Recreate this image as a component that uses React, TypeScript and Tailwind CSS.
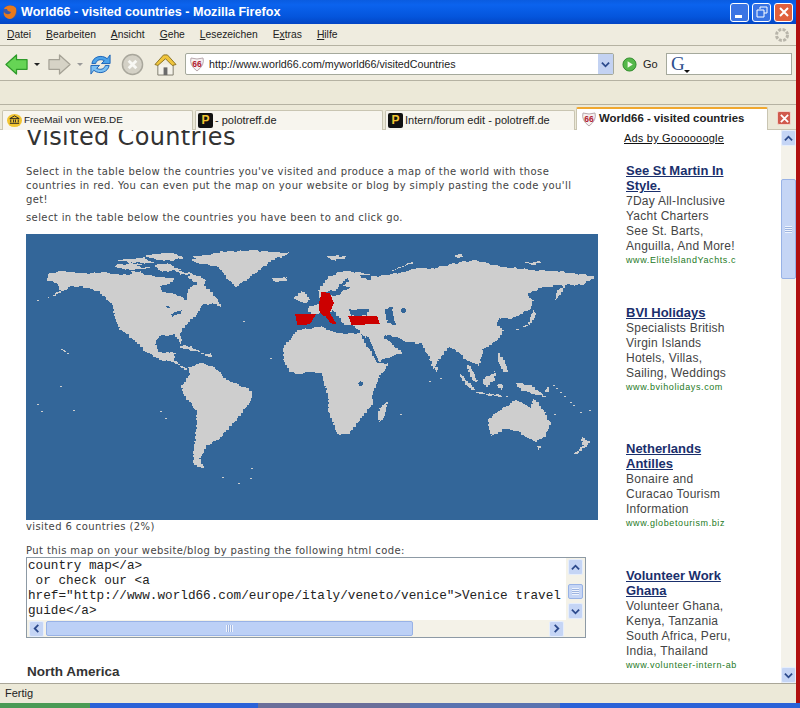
import React from "react";

const ui = "font-['Liberation_Sans',sans-serif]";

const ADS = [
  { title: ["See St Martin In", "Style."], body: ["7Day All-Inclusive", "Yacht Charters", "See St. Barts,", "Anguilla, And More!"], url: "www.ElitelslandYachts.c", gap: "mt-[17px]" },
  { title: ["BVI Holidays"], body: ["Specialists British", "Virgin Islands", "Hotels, Villas,", "Sailing, Weddings"], url: "www.bviholidays.com", gap: "mt-[38px]" },
  { title: ["Netherlands", "Antilles"], body: ["Bonaire and", "Curacao Tourism", "Information"], url: "www.globetourism.biz", gap: "mt-[47px]" },
  { title: ["Volunteer Work", "Ghana"], body: ["Volunteer Ghana,", "Kenya, Tanzania", "South Africa, Peru,", "India, Thailand"], url: "www.volunteer-intern-ab", gap: "mt-[38px]" },
];

const LAND = "#cecece";
const SEA = "#336699";
const RED = "#cc0000";

// rough coast: cut each edge up, shake it a little and snap to the map's pixels
const coast = (pts: string) => {
  const p = pts.split(" ").map((s) => s.split(",").map(Number));
  let d = "";
  p.forEach((a, i) => {
    const b = p[(i + 1) % p.length];
    const len = Math.hypot(b[0] - a[0], b[1] - a[1]);
    const n = Math.max(1, Math.round(len / 6));
    for (let k = 0; k < n; k++) {
      const t = k / n;
      const j = len > 20 ? 1.8 : 0;
      const x = a[0] + (b[0] - a[0]) * t + Math.sin(a[0] * 12.9 + k * 78.2) * j;
      const y = a[1] + (b[1] - a[1]) * t + Math.sin(a[1] * 39.3 + k * 17.7) * j;
      const sx = Math.round(x / 3) * 3;
      const sy = Math.round(y / 3) * 3;
      d += d === "" ? `M${sx} ${sy}` : `H${sx}V${sy}`;
    }
  });
  return `${d}Z`;
};

const Land = ({ list, fill = LAND }: { list: string[]; fill?: string }) => (
  <>
    {list.map((pts) => (
      <path key={pts} d={coast(pts)} fill={fill} />
    ))}
  </>
);

// frame: page x = 40 + x / 3, page y = 245 + y / 3
const AMERICA = [
  "25,85 60,78 130,85 190,82 240,90 300,85 350,95 395,100 445,130 470,115 500,130 520,150 545,185 520,175 490,180 470,210 440,240 420,265 425,295 405,270 360,272 345,295 355,320 385,325 410,320 400,345 440,375 400,350 365,345 320,320 280,280 240,250 225,220 220,180 180,140 130,125 95,125 50,150 15,165 60,135 55,115 20,105",
  "220,60 290,55 330,70 260,75",
  "230,45 310,38 340,55 270,52",
  "310,30 400,22 430,40 370,50",
  "340,60 380,55 420,75 370,80",
  "400,75 450,85 500,105 490,125 470,112",
  "270,82 300,78 305,92",
  "455,35 540,25 600,20 600,118 590,122 560,95 530,55",
  "410,300 450,305 480,322 440,312",
  "480,325 510,325 515,335",
];
const AMERICA_WATER = [
  "360,125 395,110 420,85 450,90 440,120 445,135 438,165 420,150 370,140",
  "375,183 400,185 385,190",
  "392,205 425,195 420,208 398,215",
  "290,60 340,62 310,68",
  "330,45 420,50 380,54",
];

// frame: page x = 20 + x / 3, page y = 230 + y / 3
const WEST = [
  "505,410 540,400 580,410 620,450 700,485 690,520 650,570 600,625 560,650 540,690 550,712 520,705 520,660 530,590 530,540 490,490 485,465 510,430",
  "510,90 600,65 700,62 810,70 760,90 720,120 680,150 650,170 620,140 600,110 540,100",
  "755,145 790,142 802,150 770,156",
];

// frame: page x = 300 + x / 3, page y = 230 + y / 3
const EAST = [
  "20,245 28,230 50,222 62,215 55,178 85,140 130,122 190,130 220,140 290,130 350,115 400,115 460,100 520,90 600,110 700,120 780,125 890,140 850,165 780,165 720,175 680,195 700,215 690,240 640,265 600,265 590,280 610,305 595,330 550,360 540,405 520,400 495,385 475,365 450,350 420,385 402,418 390,385 365,340 320,335 300,325 265,315 250,320 305,370 235,395 205,330 182,305 160,285 140,285 125,283 122,265 100,240 90,250 70,250 45,252",
  "-50,350 -10,300 60,290 85,300 110,310 180,310 200,350 235,400 270,400 240,440 215,500 220,520 180,570 150,610 115,615 85,540 85,500 65,430 40,425 -10,432 -30,425 -50,390",
  "262,515 255,560 240,575 232,550 245,525",
  "770,178 800,165 775,205 765,210",
  "645,300 685,280 698,240 708,258 690,285",
  "500,405 512,410 530,455 518,450",
  "80,80 150,78 110,92",
  "275,122 350,92 300,112",
  "460,72 500,78 475,85",
  "670,98 735,95 710,104",
  "345,118 375,110 370,135",
];

// frame: page x = 430 + x / 3, page y = 330 + y / 3
const OCEANIA = [
  "88,130 135,180 125,180 95,145",
  "135,185 200,195 235,200 180,197",
  "155,150 195,125 195,150 170,172",
  "200,165 215,160 218,180",
  "205,70 220,90 235,125 220,125 205,90",
  "255,158 300,165 345,200 310,190 275,180",
  "175,265 215,235 255,210 285,225 300,235 310,205 345,250 362,285 345,320 320,335 290,320 265,305 235,295 185,318 175,290",
  "322,348 335,348 328,360",
  "428,372 460,345 455,320 480,340 445,372",
  "10,112 24,112 22,125",
  "150,60 160,60 155,70",
  "355,170 358,185 340,185",
];

const DOTS = [
  [61, 349], [64, 351], [67, 353], [63, 350], [37, 300], [60, 386], [160, 411], [165, 418], [37, 404], [41, 411], [73, 410],
  [243, 321], [270, 358], [238, 483], [222, 477], [250, 478], [251, 468], [553, 385], [556, 388], [560, 392], [564, 396],
  [570, 402], [573, 405], [580, 412], [589, 410], [429, 381], [400, 414], [554, 414], [440, 378], [468, 368], [476, 380],
];

const VISITED = [
  "45,207 108,207 90,238 52,240",
  "118,170 125,140 150,145 162,175 148,205 150,215 128,212 116,195",
  "130,205 150,205 170,238 152,235",
  "205,214 292,214 300,237 215,240",
];

const WorldMap = () => (
  <svg viewBox="26 234 573 286" className="w-[573px] h-[286px] block" shapeRendering="crispEdges">
    <rect x="26" y="234" width="573" height="286" fill={SEA} />
    <g transform="translate(40 245) scale(0.33333)">
      <Land list={AMERICA} />
      <Land list={AMERICA_WATER} fill={SEA} />
    </g>
    <g transform="translate(20 230) scale(0.33333)">
      <Land list={WEST} />
    </g>
    <g transform="translate(300 230) scale(0.33333)">
      <Land list={EAST} />
      <ellipse cx="310" cy="242" rx="8" ry="7" fill={SEA} />
      <polygon fill={SEA} points="255,315 290,335 270,332" />
      <polygon fill={SEA} points="196,318 206,322 238,398 230,398" />
      <ellipse cx="182" cy="461" rx="7" ry="7" fill={SEA} />
    </g>
    <g transform="translate(430 330) scale(0.33333)">
      <Land list={OCEANIA} />
    </g>
    {/* frame: page x = 280 + x / 3, page y = 245 + y / 3 */}
    <g transform="translate(280 245) scale(0.33333)">
      <Land list={["38,160 65,135 90,165 80,175 55,165", "0,100 20,97 18,108 2,108", "140,35 180,30 165,48", "-5,28 28,22 5,38"]} />
      <Land fill={SEA} list={["120,150 150,135 165,140 175,120 200,100 208,110 188,125 222,125 190,137 178,152 150,150 125,160", "240,88 275,92 270,103 245,100", "312,190 335,188 345,240 325,235", "208,195 270,190 262,212 215,213", "125,205 150,205 190,240 165,245"]} />
      {VISITED.map((pts) => (
        <polygon key={pts} points={pts} fill={RED} />
      ))}
    </g>
    {DOTS.map(([x, y]) => (
      <rect key={`${x}-${y}`} x={x} y={y} width="2" height="1" fill={LAND} />
    ))}
  </svg>
);

const Shield = () => (
  <svg viewBox="0 0 16 16" className="w-4 h-4 shrink-0">
    <path d="M2 2 Q8 4 14 2 Q16 9 8 15 Q0 9 2 2Z" fill="#f6f1f1" stroke="#b9a8ac" />
    <text x="8" y="11" textAnchor="middle" fontSize="8.5" fontWeight="700" fill="#b02030" fontFamily="Liberation Sans">66</text>
  </svg>
);

const PIcon = () => (
  <span className="w-[15px] h-[15px] shrink-0 rounded-[2px] bg-[#111] text-[#f2c531] text-[12px] leading-[15px] font-bold text-center">P</span>
);

const Tab = ({ icon, label, w, text }: { icon: React.ReactNode; label: string; w: string; text: string }) => (
  <div className={`${w} h-[20px] mt-[5px] mr-[2px] flex items-center gap-[2px] pl-[2px] bg-[#f7f5ee] border border-[#c9c5b2] border-b-0 rounded-t-[2px] ${text} text-[#222] whitespace-nowrap`}>
    {icon}
    <span>{label}</span>
  </div>
);

const Up = ({ d }: { d: string }) => (
  <div className="w-[15px] h-[16px] shrink-0 rounded-[2px] bg-[#c5d5f5] border border-[#e6eefc] flex items-center justify-center">
    <svg viewBox="0 0 10 10" className="w-[9px] h-[9px]">
      <path d={d} fill="none" stroke="#2c4a8c" strokeWidth="2" />
    </svg>
  </div>
);

const UP = "M1 7 L5 3 L9 7";
const DOWN = "M1 3 L5 7 L9 3";
const LEFT = "M7 1 L3 5 L7 9";
const RIGHT = "M3 1 L7 5 L3 9";

const Grip = ({ vertical }: { vertical?: boolean }) => (
  <div className={vertical ? "w-[7px] h-[7px] bg-[repeating-linear-gradient(0deg,#eef3fd_0,#eef3fd_1px,#9db4e0_1px,#9db4e0_2px)]" : "w-[7px] h-[7px] bg-[repeating-linear-gradient(90deg,#eef3fd_0,#eef3fd_1px,#9db4e0_1px,#9db4e0_2px)]"} />
);

const Toolbar = () => (
  <div className="h-[35px] shrink-0 flex items-center border-b border-[#b5b2a2] bg-[#efecdf] pl-[5px] pt-[2px] [&>*]:shrink-0">
    <svg viewBox="0 0 24 24" className="w-[23px] h-[23px]">
      <path d="M1 12 L12 2 V7 H23 V17 H12 V22Z" fill="#66d455" stroke="#2f9a2a" strokeWidth="1.3" strokeLinejoin="round" />
    </svg>
    <span className="ml-[6px] w-0 h-0 border-x-[3px] border-x-transparent border-t-[3px] border-t-[#222]" />
    <svg viewBox="0 0 24 24" className="ml-[8px] w-[23px] h-[23px]">
      <path d="M23 12 L12 2 V7 H1 V17 H12 V22Z" fill="#d6d3c6" stroke="#a5a296" strokeWidth="1.3" strokeLinejoin="round" />
    </svg>
    <span className="ml-[6px] w-0 h-0 border-x-[3px] border-x-transparent border-t-[3px] border-t-[#999]" />
    <svg viewBox="0 0 24 24" className="ml-[6px] w-[23px] h-[23px]">
      <path d="M3 11 C4 4 13 1 19 6 L22 2 V11 H13 L16 8 C12 6 8 7 7 11Z" fill="#4da3e8" stroke="#1c64b8" />
      <path d="M21 13 C20 20 11 23 5 18 L2 22 V13 H11 L8 16 C12 18 16 17 17 13Z" fill="#7cc0f2" stroke="#1c64b8" />
    </svg>
    <svg viewBox="0 0 24 24" className="ml-[9px] w-[23px] h-[23px]">
      <circle cx="12" cy="12" r="10.5" fill="#d4d1c6" stroke="#a9a79c" strokeWidth="1.5" />
      <path d="M8 8 L16 16 M16 8 L8 16" stroke="#f8f8f4" strokeWidth="3" />
    </svg>
    <svg viewBox="0 0 24 24" className="ml-[10px] w-[23px] h-[23px]">
      <path d="M4 12 V23 H20 V12" fill="#f4f2ea" stroke="#7d7a6c" />
      <path d="M1 12 L10 2 H14 L23 12 L19 13 L12 6 L4 13Z" fill="#f0c53c" stroke="#8a7224" />
      <rect x="10" y="15" width="4" height="8" fill="#6a6a6a" />
    </svg>
    <div className="ml-[8px] w-[429px] h-[22px] flex items-center bg-white border border-[#a5a99c] rounded-[2px]">
      <span className="ml-[3px]"><Shield /></span>
      <span className={`${ui} ml-[4px] flex-1 text-[10.7px] text-[#222]`}>http://www.world66.com/myworld66/visitedCountries</span>
      <div className="w-[15px] h-[20px] bg-[#c3d2f2] flex items-center justify-center">
        <svg viewBox="0 0 10 10" className="w-[9px] h-[9px]"><path d={DOWN} fill="none" stroke="#2c4a8c" strokeWidth="2" /></svg>
      </div>
    </div>
    <svg viewBox="0 0 16 16" className="ml-[8px] w-[15px] h-[15px]">
      <circle cx="8" cy="8" r="7" fill="#55b84a" stroke="#2f8a2a" />
      <path d="M6 4.5 L11.5 8 L6 11.5Z" fill="#f2fbe8" />
    </svg>
    <span className="ml-[6px] w-[23px] text-[11px] text-[#222]">Go</span>
    <div className="w-[126px] h-[22px] flex items-center bg-white border border-[#a5a99c] pl-[3px]">
      <div className="relative w-[20px] h-[18px] text-[#2d4f8d] text-[19px] leading-[18px] font-['Liberation_Serif',serif] pl-[1px]">
        G
        <span className="absolute right-[0px] bottom-[0px] w-0 h-0 border-x-[3px] border-x-transparent border-t-[3px] border-t-[#111]" />
      </div>
    </div>
  </div>
);

const App = () => {
  return (
    <div className={`${ui} w-[800px] h-[708px] overflow-hidden flex flex-col bg-[#b01010]`}>
      <div className="flex-1 min-h-0 flex flex-col mr-[4px] bg-[#ece9d8]">
        {/* Title bar */}
        <div className="h-[24px] shrink-0 flex items-center pl-[2px] pr-[3px] bg-[linear-gradient(180deg,#0a5ce0_0%,#0b63ee_20%,#0455dc_70%,#0345c4_100%)]">
          <svg viewBox="0 0 16 16" className="w-[16px] h-[16px]">
            <circle cx="8" cy="8" r="7" fill="#3b5aa8" />
            <path d="M2 5 C3 1 11 0 14 4 C15 8 13 14 8 15 C4 15 1 11 2 8 C4 11 8 11 9 8 C7 7 5 7 5 5Z" fill="#e8791c" />
          </svg>
          <span className="ml-[3px] flex-1 text-[12.6px] font-bold text-white">World66 - visited countries - Mozilla Firefox</span>
          <div className="flex gap-[3px]">
            <div className="w-[19px] h-[19px] rounded-[3px] border border-white bg-[#3a74e4] flex items-end pl-[4px] pb-[3px]">
              <span className="w-[7px] h-[3px] bg-white" />
            </div>
            <div className="w-[19px] h-[19px] rounded-[3px] border border-white bg-[#3a74e4] flex items-center justify-center">
              <svg viewBox="0 0 12 12" className="w-[12px] h-[12px]"><path d="M4 3 V1 H11 V7 H8 M1 4 H8 V11 H1Z" fill="none" stroke="#fff" /></svg>
            </div>
            <div className="w-[19px] h-[19px] rounded-[3px] border border-white bg-[#e0603c] flex items-center justify-center">
              <svg viewBox="0 0 12 12" className="w-[12px] h-[12px]"><path d="M2 2 L10 10 M10 2 L2 10" stroke="#fff" strokeWidth="2" /></svg>
            </div>
          </div>
        </div>

        {/* Menu */}
        <div className="h-[22px] shrink-0 flex items-center justify-between border-b border-[#b5b2a2] bg-[#efecdf] pl-[7px] pr-[6px] text-[10.3px] text-[#222]">
          <div className="flex gap-[15px]">
            <span><u>D</u>atei</span>
            <span><u>B</u>earbeiten</span>
            <span><u>A</u>nsicht</span>
            <span><u>G</u>ehe</span>
            <span><u>L</u>esezeichen</span>
            <span>E<u>x</u>tras</span>
            <span><u>H</u>ilfe</span>
          </div>
          <svg viewBox="0 0 16 16" className="w-[16px] h-[16px]">
            <circle cx="8" cy="8" r="5.5" fill="none" stroke="#b8b5aa" strokeWidth="3" strokeDasharray="3 1.3" />
          </svg>
        </div>

        <Toolbar />

        {/* Empty bookmarks bar */}
        <div className="h-[24px] shrink-0 border-b border-[#b5b2a2] bg-[#ece9d8]" />

        {/* Tabs */}
        <div className="h-[25px] shrink-0 flex items-start pl-[2px] border-b border-[#c9c5b2] bg-[#ece9d8]">
          <Tab w="w-[191px]" text="text-[9.9px]" label="FreeMail von WEB.DE" icon={
            <svg viewBox="0 0 16 16" className="w-[15px] h-[15px] ml-[2px] shrink-0">
              <ellipse cx="8" cy="8" rx="8" ry="7" fill="#f2c531" />
              <path d="M3 11 H13 M4 10 V7 M7 10 V7 M9 10 V7 M12 10 V7 M3 6 L8 3 L13 6Z" stroke="#222" fill="none" />
            </svg>
          } />
          <Tab w="w-[188px]" text="text-[11px]" label="- polotreff.de" icon={<PIcon />} />
          <Tab w="w-[190px]" text="text-[11px]" label="Intern/forum edit - polotreff.de" icon={<PIcon />} />
          <div className="w-[192px] h-[24px] -ml-[1px] mt-[2px] pb-[3px] flex items-center gap-[2px] pl-[4px] bg-white border-t-2 border-[#f0a830] border-x border-x-[#c9c5b2] rounded-t-[2px] text-[11.4px] font-bold text-[#222]">
            <Shield />
            <span>World66 - visited countries</span>
          </div>
          <div className="ml-[9px] mt-[6px] w-[14px] h-[14px] rounded-[2px] bg-[#d05a4c] border border-[#f2d3c8] flex items-center justify-center">
            <svg viewBox="0 0 10 10" className="w-[9px] h-[9px]"><path d="M1 1 L9 9 M9 1 L1 9" stroke="#fff" strokeWidth="2" /></svg>
          </div>
        </div>

        {/* Page */}
        <div className="flex-1 min-h-0 flex bg-white">
          <div className="w-[598px] shrink-0 overflow-hidden pl-[26px] font-['DejaVu_Sans',sans-serif] text-[10px] tracking-[0.4px] text-[#444]">
            <h1 className="-mt-[7px] text-[24px] leading-[28px] font-normal tracking-[0.35px] text-[#333] whitespace-nowrap">Visited Countries</h1>
            <p className="mt-[14px] leading-[14px] w-[560px]">Select in the table below the countries you've visited and produce a map of the world with those countries in red. You can even put the map on your website or blog by simply pasting the code you'll get!</p>
            <p className="mt-[4px] leading-[14px]">select in the table below the countries you have been to and click go.</p>
            <div className="mt-[9px]"><WorldMap /></div>
            <p className="leading-[14px]">visited 6 countries (2%)</p>
            <p className="mt-[10px] leading-[14px]">Put this map on your website/blog by pasting the following html code:</p>
            <div className="-mt-[1px] w-[560px] h-[81px] flex border border-[#8d9aa5] bg-white">
              <div className="flex-1 min-w-0 flex flex-col">
                <pre className="flex-1 pl-[1px] font-['Liberation_Mono',monospace] text-[12.7px] leading-[15px] tracking-[0px] text-[#222]">{`country map</a>
 or check our <a
href="http://www.world66.com/europe/italy/veneto/venice">Venice travel
guide</a>`}</pre>
                <div className="h-[17px] flex items-center px-[2px] bg-[#f4f2e8]">
                  <Up d={LEFT} />
                  <div className="ml-[2px] w-[367px] h-[15px] rounded-[2px] bg-[#bcd0f6] border border-[#98b2e6] flex items-center justify-center"><Grip vertical={false} /></div>
                  <div className="flex-1" />
                  <Up d={RIGHT} />
                </div>
              </div>
              <div className="w-[19px] flex flex-col items-center pt-[1px] bg-[#f4f2e8]">
                <Up d={UP} />
                <div className="h-[9px]" />
                <div className="w-[15px] h-[15px] rounded-[2px] bg-[#c5d5f5] border border-[#98b2e6] flex items-center justify-center"><Grip vertical /></div>
                <div className="h-[4px]" />
                <Up d={DOWN} />
              </div>
            </div>
            <h2 className="mt-[26px] ml-[1px] font-['Liberation_Sans',sans-serif] text-[13.5px] leading-[16px] font-bold tracking-[0px] text-[#333]">North America</h2>
          </div>

          <div className="flex-1 min-w-0 pl-[28px] font-['Liberation_Sans',sans-serif]">
            <a className="block mt-[1px] text-[11px] leading-[15px] tracking-[0.2px] text-[#111] underline -ml-[2px]">Ads by Goooooogle</a>
            {ADS.map((ad) => (
              <div key={ad.url} className={ad.gap}>
                {ad.title.map((line) => (
                  <div key={line} className="text-[13px] leading-[15px] font-bold text-[#1a2f6c] underline">{line}</div>
                ))}
                <div className="pt-[1px]">
                  {ad.body.map((line) => (
                    <div key={line} className="text-[12px] leading-[15px] tracking-[0.25px] text-[#444] whitespace-nowrap">{line}</div>
                  ))}
                </div>
                <div className="text-[9px] leading-[13px] tracking-[0.6px] font-medium text-[#257a25] whitespace-nowrap">{ad.url}</div>
              </div>
            ))}
          </div>

          {/* Page scrollbar */}
          <div className="w-[15px] shrink-0 flex flex-col bg-[#f4f2ea]">
            <Up d={UP} />
            <div className="mt-[33px] w-[15px] h-[100px] rounded-[2px] bg-[#c5d5f5] border border-[#98b2e6] flex items-center justify-center"><Grip vertical /></div>
            <div className="flex-1" />
            <Up d={DOWN} />
          </div>
        </div>

        {/* Status bar */}
        <div className="h-[20px] shrink-0 flex items-center pl-[5px] border-t border-[#a9a698] bg-[#ece9d8] text-[11px] text-[#222]">Fertig</div>
      </div>

      {/* Taskbar sliver */}
      <div className="h-[5px] shrink-0 flex bg-[#2a62d8]">
        <div className="w-[90px] bg-[#4a9a55]" />
        <div className="w-[168px]" />
        <div className="w-[152px] bg-[#6a6f9a]" />
        <div className="w-[150px] bg-[#5a73b0]" />
      </div>
    </div>
  );
};

export default App;
